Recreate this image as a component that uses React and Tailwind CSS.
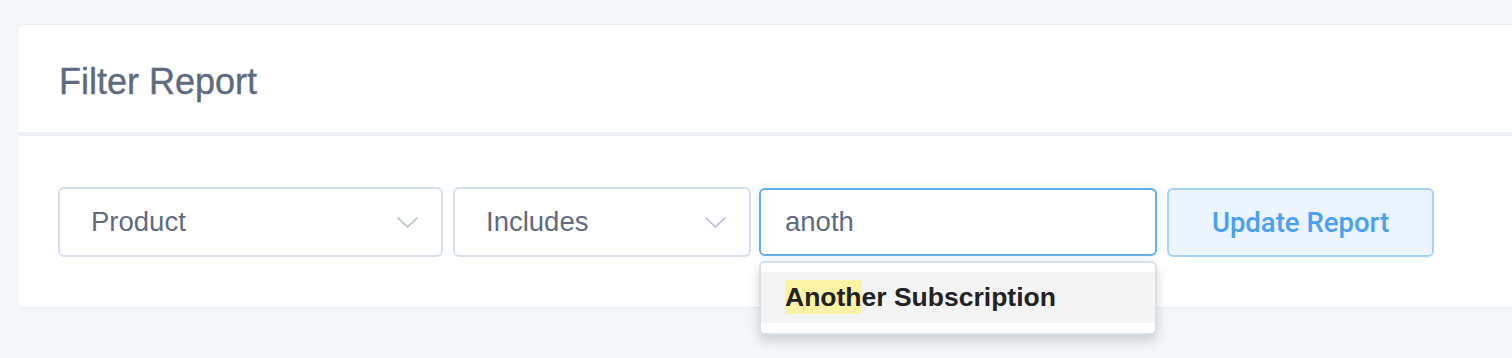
function Select({ label, width }) {
  return (
    <div className={`${width} h-[70px] flex items-center justify-between rounded-md border-2 border-[#d6e0eb] bg-white pl-[31px] pr-[22px]`}>
      <span className="text-[27.5px] text-[#5f6b7e]">{label}</span>
      <svg width="23" height="13" viewBox="0 0 23 13" fill="none" className="text-[#aebacb]">
        <path d="M1.5 1.5 L11.5 11 L21.5 1.5" stroke="currentColor" strokeWidth="1.4" />
      </svg>
    </div>
  )
}

export default function App() {
  return (
    <div className="min-h-[358px] w-full overflow-hidden bg-[#f4f7fa] pt-[25px] pl-[18px]" style={{ fontFamily: '"Liberation Sans", Arial, sans-serif' }}>
      <div className="w-[1520px] rounded-l-md bg-white shadow-[0_0_0_1px_#e9eef3]">
        <div className="h-[111px] border-b-4 border-[#edf1f5] pl-[41px] pt-[35px]">
          <h1 className="text-[36px] leading-[44px] text-[#5d6b7f] [-webkit-text-stroke:0.4px_#5d6b7f]">Filter Report</h1>
        </div>
        <div className="pl-[40px] pt-[51px] pb-[50px] flex items-start">
          <Select label="Product" width="w-[385px]" />
          <div className="ml-[10px]">
            <Select label="Includes" width="w-[298px]" />
          </div>
          <div className="relative ml-[8px]">
            <div className="w-[398px] h-[68px] mt-[1px] flex items-center rounded-md border-2 border-[#66aee8] bg-white pl-[24px] shadow-[0_0_6px_2px_rgba(66,153,225,0.12)]">
              <span className="text-[27.5px] text-[#5f6b7e]">anoth</span>
            </div>
            <div className="absolute left-0 top-[74px] z-10 w-[398px] rounded-md border-2 border-[#d6e0eb] bg-white pt-[9px] pb-[10px] shadow-[0_6px_12px_rgba(0,0,0,0.16)]">
              <div className="h-[51px] flex items-center bg-[#f4f4f4] pl-[24px]">
                <span className="text-[26.5px] font-bold text-[#222]">
                  <span className="bg-[#faf3a6] py-[2px]">Anoth</span>er Subscription
                </span>
              </div>
            </div>
          </div>
          <button className="ml-[10px] w-[267px] h-[69px] mt-[1px] rounded-md border-2 border-[#a8d1f9] bg-[#ebf4ff] text-[27.5px] font-medium text-[#4aa0f2]" style={{ fontFamily: 'Roboto, "Liberation Sans", sans-serif' }}>
            Update Report
          </button>
        </div>
      </div>
    </div>
  )
}
